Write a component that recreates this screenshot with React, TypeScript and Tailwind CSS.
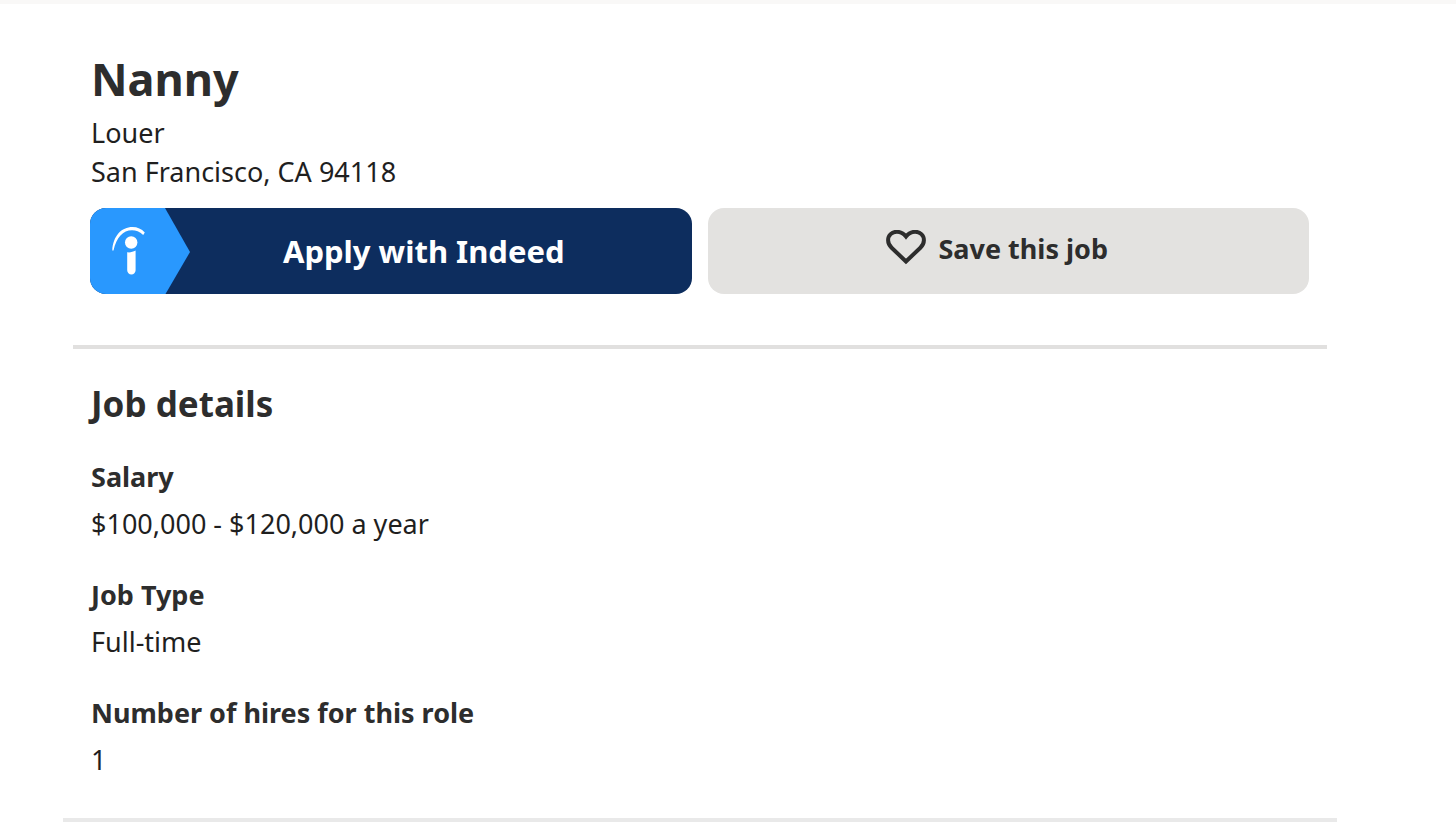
type Detail = { label: string; value: string };

const details: Detail[] = [
  { label: "Salary", value: "$100,000 - $120,000 a year" },
  { label: "Job Type", value: "Full-time" },
  { label: "Number of hires for this role", value: "1" },
];

function IndeedBadge() {
  return (
    <svg className="h-full w-[102px] shrink-0" viewBox="0 0 102 86" aria-hidden="true">
      <path d="M0 0H75L100 44L75.5 86H0Z" fill="#2998fe" />
      <path
        d="M22.3 42.5C23 28 31.5 19 42.5 19C47.5 19 51.500 21 54.800 24.400L53.200 27C49.500 23.600 46 22.300 42 22.300C33 22.300 26.500 29.500 23.500 42.500Z"
        fill="#fff"
      />
      <circle cx="41.200" cy="34.500" r="6.200" fill="#fff" />
      <path d="M37.200 44.300C40.200 44.600 43 44.100 45.600 42.600V62.300A4.200 4.200 0 0 1 37.200 62.300Z" fill="#fff" />
    </svg>
  );
}

function HeartIcon() {
  return (
    <svg className="h-[36px] w-[40px] shrink-0" viewBox="0 0 40 36" fill="none" aria-hidden="true">
      <path
        d="M20 31.500L5.600 17.700C3.300 15.500 2.100 13.200 2.100 10.200C2.100 5.200 5.900 1.800 10.900 1.800C14.500 1.800 17.400 3.300 20 6.500C22.600 3.300 25.500 1.800 29.100 1.800C34.100 1.800 37.900 5.200 37.900 10.200C37.900 13.200 36.700 15.500 34.400 17.700Z"
        stroke="#2d2d2d"
        strokeWidth="4"
      />
    </svg>
  );
}

export default function App() {
  return (
    <main className="border-t-4 border-[#f9f8f7] bg-white pr-[119px] pl-[63px] font-['Noto_Sans',sans-serif] text-[27px] leading-[39px] text-[#1f1f1f]">
      <header className="pt-[45px] pr-7 pl-7">
        <h1 className="text-[45px] leading-[60px] font-bold text-[#2d2d2d]">Nanny</h1>
        <div className="mt-1">
          <p>Louer</p>
          <p>San Francisco, CA 94118</p>
        </div>
      </header>

      <div className="mt-[17px] grid grid-cols-2 gap-4 pr-7 pl-[27px]">
        <button
          type="button"
          className="flex h-[86px] items-center overflow-hidden rounded-2xl bg-[#0d2d5e] text-[31px] font-bold text-white"
        >
          <IndeedBadge />
          <span className="grow pr-[36px]">Apply with Indeed</span>
        </button>
        <button
          type="button"
          className="flex h-[86px] items-center justify-center gap-3 rounded-2xl bg-[#e3e2e0] pr-[22px] pb-1.5 font-bold text-[#2d2d2d]"
        >
          <HeartIcon />
          <span>Save this job</span>
        </button>
      </div>

      <hr className="mx-[10px] mt-[51px] border-t-4 border-[#e1e0df]" />

      <section className="px-7 pt-[31px] pb-[39px]">
        <h2 className="text-[35px] leading-[48px] font-bold text-[#2d2d2d]">Job details</h2>
        <dl className="mt-[29px] flex flex-col gap-8">
          {details.map(({ label, value }) => (
            <div key={label} className="flex flex-col gap-2">
              <dt className="font-bold text-[#2d2d2d]">{label}</dt>
              <dd>{value}</dd>
            </div>
          ))}
        </dl>
      </section>

      <hr className="border-t-4 border-[#e9e9e9]" />
    </main>
  );
}
